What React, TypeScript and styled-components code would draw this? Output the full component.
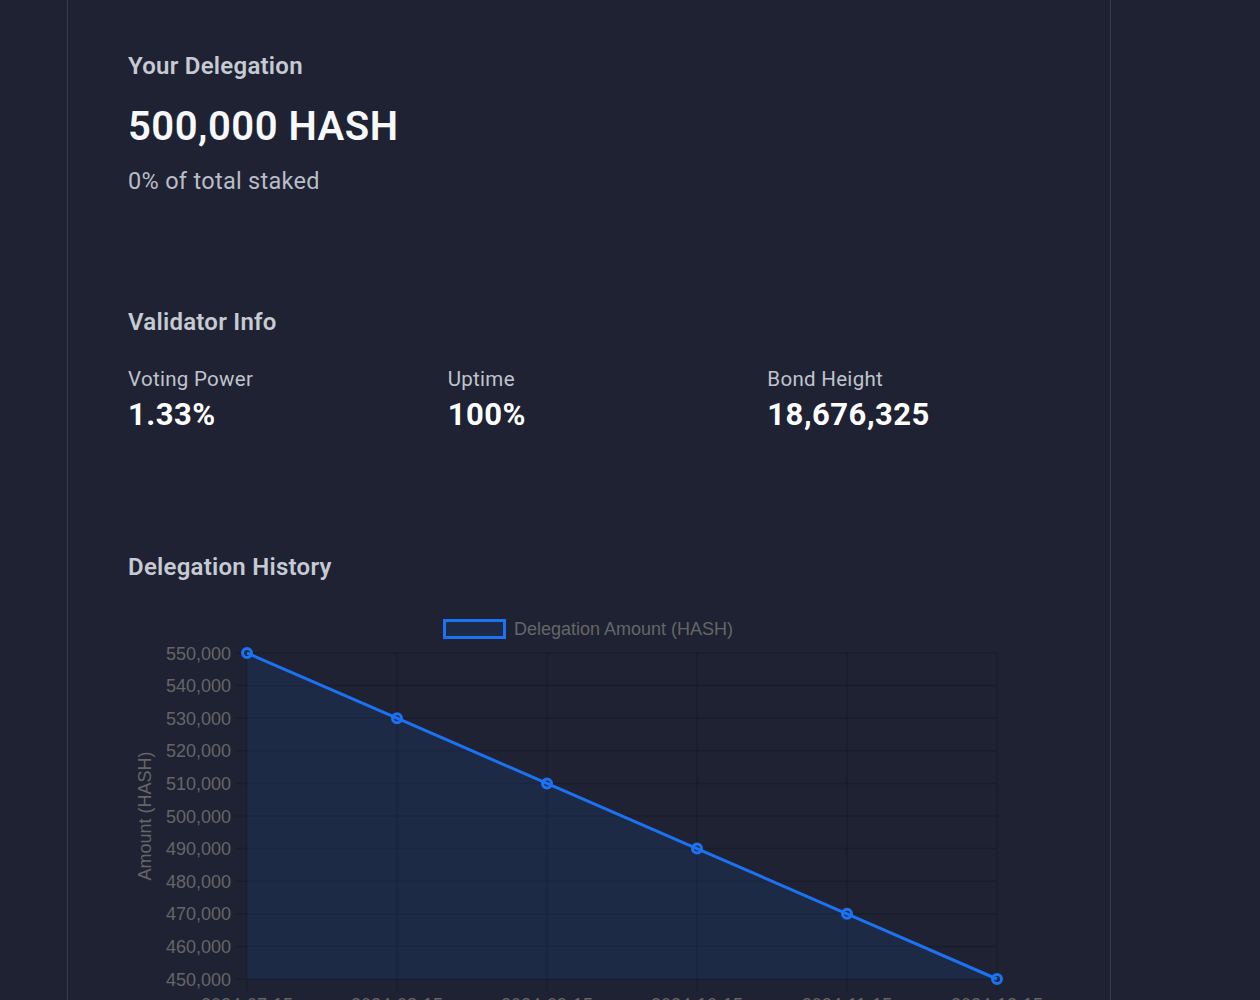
import React from "react";
import styled, { createGlobalStyle } from "styled-components";

const GlobalStyle = createGlobalStyle`
  html, body { margin: 0; padding: 0; background: #1e2233; }
  body { font-family: Roboto, "Noto Sans", sans-serif; color: #f5f7fa; }
`;

const Shell = styled.div`
  margin-left: 67px;
  min-height: 1000px;
  border-left: 1px solid #363c4d;
  border-right: 1px solid #363c4d;
  padding: 50px 60px 0;
  box-sizing: content-box;
  width: 922px;
`;

const Section = styled.section<{ $mt?: number }>`
  display: flex;
  flex-direction: column;
  margin-top: ${(p) => p.$mt ?? 0}px;
`;

const Heading = styled.h2`
  margin: 0;
  font-size: 24px;
  line-height: 32px;
  font-weight: 600;
  letter-spacing: 0.25px;
  color: #c6cad2;
`;

const BigNumber = styled.div`
  margin-top: 21px;
  font-size: 40px;
  line-height: 48px;
  font-weight: 600;
  letter-spacing: 0.5px;
  color: #f6f8fb;
`;

const SubText = styled.div`
  margin-top: 15px;
  font-size: 23.5px;
  line-height: 30px;
  letter-spacing: 0.3px;
  color: #b9bdc6;
`;

const StatGrid = styled.div`
  margin-top: 27px;
  display: grid;
  grid-template-columns: repeat(3, 1fr);
  column-gap: 37px;
`;

const Stat = styled.div`
  display: flex;
  flex-direction: column;
  gap: 4px;
`;

const StatLabel = styled.div`
  font-size: 20.5px;
  line-height: 28px;
  letter-spacing: 0.3px;
  color: #c0c4cc;
`;

const StatValue = styled.div`
  font-size: 31px;
  line-height: 36px;
  font-weight: 700;
  letter-spacing: 0.5px;
  color: #ffffff;
`;

const ChartBox = styled.div`
  margin-top: 22px;
  width: 922px;
  height: 420px;
`;

const values = [550000, 530000, 510000, 490000, 470000, 450000];
const dates = ["2024-07-15", "2024-08-15", "2024-09-15", "2024-10-15", "2024-11-15", "2024-12-15"];

function Chart() {
  const left = 119;
  const right = 869;
  const top = 48;
  const bottom = 374;
  const xs = values.map((_, i) => left + ((right - left) / (values.length - 1)) * i);
  const yFor = (v: number) => top + ((550000 - v) / 100000) * (bottom - top);
  const ticks = Array.from({ length: 11 }, (_, i) => 550000 - i * 10000);
  const pts = values.map((v, i) => `${xs[i]},${yFor(v)}`).join(" ");
  const area = `${left},${bottom} ${pts} ${right},${bottom}`;
  const grid = "rgba(0,0,0,0.14)";
  const blue = "#1c72f2";
  return (
    <svg width={922} height={420} viewBox="0 0 922 420" fontFamily='"Liberation Sans", Arial, sans-serif'>
      <rect x={316.5} y={15.5} width={60} height={17} fill="#1c2a45" stroke={blue} strokeWidth={3} />
      <text x={386} y={30} fontSize={18} fill="#666">Delegation Amount (HASH)</text>
      {ticks.map((t) => (
        <g key={t}>
          <line x1={left - 12} x2={right} y1={yFor(t)} y2={yFor(t)} stroke={grid} strokeWidth={1.5} />
          <text x={103} y={yFor(t) + 6.5} fontSize={18} fill="#666" textAnchor="end">
            {t.toLocaleString("en-US")}
          </text>
        </g>
      ))}
      {xs.map((x, i) => (
        <g key={i}>
          <line x1={x} x2={x} y1={top} y2={bottom + 12} stroke={grid} strokeWidth={1.5} />
          <text x={x} y={406} fontSize={18} fill="#666" textAnchor="middle">{dates[i]}</text>
        </g>
      ))}
      <text
        x={0}
        y={0}
        fontSize={18}
        fill="#666"
        textAnchor="middle"
        transform={`translate(23 ${(top + bottom) / 2}) rotate(-90)`}
      >
        Amount (HASH)
      </text>
      <polygon points={area} fill="rgba(28,114,242,0.1)" />
      <polyline points={pts} fill="none" stroke={blue} strokeWidth={3} />
      {values.map((v, i) => (
        <circle key={i} cx={xs[i]} cy={yFor(v)} r={4.5} fill="rgba(28,114,242,0.1)" stroke={blue} strokeWidth={3} />
      ))}
    </svg>
  );
}

export default function App() {
  return (
    <>
      <GlobalStyle />
      <Shell>
        <Section>
          <Heading>Your Delegation</Heading>
          <BigNumber>500,000 HASH</BigNumber>
          <SubText>0% of total staked</SubText>
        </Section>
        <Section $mt={110}>
          <Heading>Validator Info</Heading>
          <StatGrid>
            <Stat>
              <StatLabel>Voting Power</StatLabel>
              <StatValue>1.33%</StatValue>
            </Stat>
            <Stat>
              <StatLabel>Uptime</StatLabel>
              <StatValue>100%</StatValue>
            </Stat>
            <Stat>
              <StatLabel>Bond Height</StatLabel>
              <StatValue>18,676,325</StatValue>
            </Stat>
          </StatGrid>
        </Section>
        <Section $mt={118}>
          <Heading>Delegation History</Heading>
          <ChartBox>
            <Chart />
          </ChartBox>
        </Section>
      </Shell>
    </>
  );
}
